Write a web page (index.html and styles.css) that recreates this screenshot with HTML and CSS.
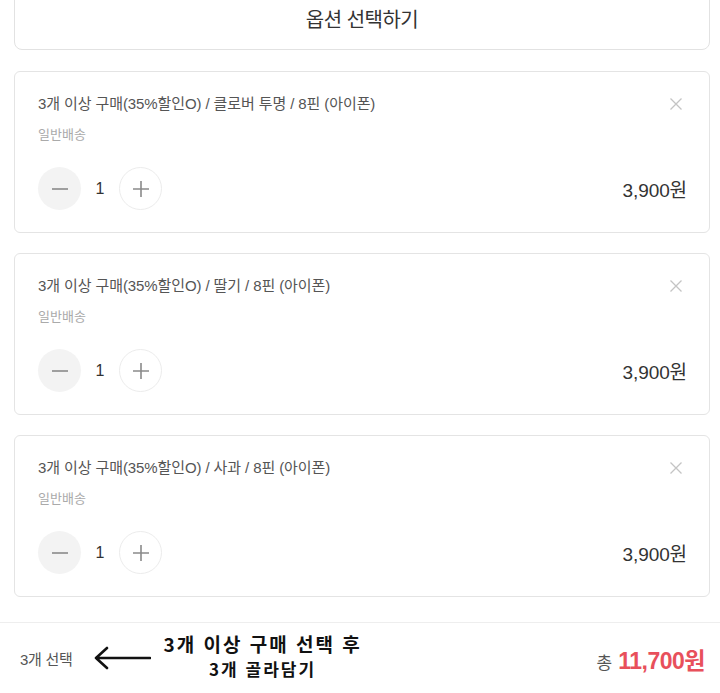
FILE: index.html
```html
<!DOCTYPE html>
<html lang="ko">
<head>
<meta charset="utf-8">
<link rel="stylesheet" href="styles.css">
</head>
<body>
<div class="page">
  <div class="select-btn">옵션 선택하기</div>

  <div class="card">
    <div class="title-row">
      <div class="opt-title">3개 이상 구매(35%할인O) / 클로버 투명 / 8핀 (아이폰)</div>
      <svg class="close" width="14" height="14" viewBox="0 0 14 14"><path d="M1.5 1.5L12.5 12.5M12.5 1.5L1.5 12.5" stroke="#c4c4c4" stroke-width="1.3" fill="none"/></svg>
    </div>
    <div class="ship">일반배송</div>
    <div class="qty-row">
      <div class="stepper">
        <span class="circle minus"><svg width="18" height="18" viewBox="0 0 18 18"><path d="M1 9H17" stroke="#8a8a8a" stroke-width="1.6"/></svg></span>
        <span class="num">1</span>
        <span class="circle plus"><svg width="18" height="18" viewBox="0 0 18 18"><path d="M1 9H17M9 1V17" stroke="#8a8a8a" stroke-width="1.6"/></svg></span>
      </div>
      <div class="price">3,900원</div>
    </div>
  </div>

  <div class="card">
    <div class="title-row">
      <div class="opt-title">3개 이상 구매(35%할인O) / 딸기 / 8핀 (아이폰)</div>
      <svg class="close" width="14" height="14" viewBox="0 0 14 14"><path d="M1.5 1.5L12.5 12.5M12.5 1.5L1.5 12.5" stroke="#c4c4c4" stroke-width="1.3" fill="none"/></svg>
    </div>
    <div class="ship">일반배송</div>
    <div class="qty-row">
      <div class="stepper">
        <span class="circle minus"><svg width="18" height="18" viewBox="0 0 18 18"><path d="M1 9H17" stroke="#8a8a8a" stroke-width="1.6"/></svg></span>
        <span class="num">1</span>
        <span class="circle plus"><svg width="18" height="18" viewBox="0 0 18 18"><path d="M1 9H17M9 1V17" stroke="#8a8a8a" stroke-width="1.6"/></svg></span>
      </div>
      <div class="price">3,900원</div>
    </div>
  </div>

  <div class="card">
    <div class="title-row">
      <div class="opt-title">3개 이상 구매(35%할인O) / 사과 / 8핀 (아이폰)</div>
      <svg class="close" width="14" height="14" viewBox="0 0 14 14"><path d="M1.5 1.5L12.5 12.5M12.5 1.5L1.5 12.5" stroke="#c4c4c4" stroke-width="1.3" fill="none"/></svg>
    </div>
    <div class="ship">일반배송</div>
    <div class="qty-row">
      <div class="stepper">
        <span class="circle minus"><svg width="18" height="18" viewBox="0 0 18 18"><path d="M1 9H17" stroke="#8a8a8a" stroke-width="1.6"/></svg></span>
        <span class="num">1</span>
        <span class="circle plus"><svg width="18" height="18" viewBox="0 0 18 18"><path d="M1 9H17M9 1V17" stroke="#8a8a8a" stroke-width="1.6"/></svg></span>
      </div>
      <div class="price">3,900원</div>
    </div>
  </div>
</div>

<div class="footer">
  <div class="footer-left">
    <span class="count">3개 선택</span>
    <svg class="arrow" width="58" height="26" viewBox="0 0 58 26"><path d="M3 13H57M3 13L14 3M3 13L14 23" stroke="#111" stroke-width="2.6" fill="none" stroke-linecap="round"/></svg>
    <div class="note">
      <div class="note-1">3개 이상 구매 선택 후</div>
      <div class="note-2">3개 골라담기</div>
    </div>
  </div>
  <div class="total"><span class="total-label">총</span><span class="total-price">11,700원</span></div>
</div>
</body>
</html>
```

FILE: styles.css
```css
* { box-sizing: border-box; }
html, body {
  margin: 0;
  padding: 0;
  background: #fff;
  font-family: "Liberation Sans", "Noto Sans CJK KR", sans-serif;
  color: #333;
  overflow: hidden;
}
.page {
  padding: 0 10px 0 14px;
}
.select-btn {
  margin-top: -14px;
  height: 64px;
  border: 1px solid #e2e2e2;
  border-radius: 8px;
  display: flex;
  align-items: center;
  justify-content: center;
  font-family: "Noto Sans CJK KR", sans-serif;
  font-size: 20px;
  color: #333;
  letter-spacing: -0.5px;
}
.card {
  margin-top: 21px;
  border: 1px solid #e4e4e4;
  border-radius: 6px;
  padding: 22px 22px 21px 23px;
  height: 162px;
}
.card + .card {
  margin-top: 20px;
}
.title-row {
  display: flex;
  justify-content: space-between;
  align-items: center;
  height: 20px;
}
.opt-title {
  font-size: 15px;
  line-height: 20px;
  color: #555;
  letter-spacing: -0.1px;
}
.close {
  margin-right: 4px;
}
.ship {
  margin-top: 10px;
  font-family: "Noto Sans CJK KR", sans-serif;
  font-size: 13px;
  line-height: 20px;
  color: #aaa;
}
.qty-row {
  margin-top: 23px;
  display: flex;
  justify-content: space-between;
  align-items: center;
  height: 43px;
}
.stepper {
  display: flex;
  align-items: center;
}
.circle {
  width: 43px;
  height: 43px;
  border-radius: 50%;
  display: flex;
  align-items: center;
  justify-content: center;
}
.minus {
  background: #f3f3f3;
}
.plus {
  background: #fff;
  border: 1px solid #ececec;
}
.num {
  width: 38px;
  text-align: center;
  font-size: 16px;
  color: #333;
}
.price {
  font-size: 19px;
  color: #333;
  letter-spacing: -0.1px;
}
.footer {
  margin-top: 25px;
  border-top: 1px solid #eee;
  height: 72px;
  display: flex;
  justify-content: space-between;
  align-items: center;
  padding: 0 15px 0 20px;
}
.footer-left {
  display: flex;
  align-items: center;
}
.count {
  font-size: 15px;
  color: #555;
  letter-spacing: -0.3px;
}
.arrow {
  margin-left: 21px;
  margin-top: -2px;
}
.note {
  margin-left: 12px;
  margin-top: -5px;
  text-align: center;
  font-family: "Noto Sans CJK KR", sans-serif;
  font-weight: 700;
  color: #111;
}
.note-1 {
  font-size: 19px;
  line-height: 26px;
  letter-spacing: 2px;
}
.note-2 {
  font-size: 17px;
  line-height: 24px;
  letter-spacing: 2px;
}
.total {
  display: flex;
  align-items: baseline;
}
.total-label {
  font-family: "Noto Sans CJK KR", sans-serif;
  font-size: 17px;
  color: #555;
  margin-right: 6px;
}
.total-price {
  font-size: 23px;
  font-weight: 700;
  color: #e8505b;
  letter-spacing: -0.5px;
}
```
